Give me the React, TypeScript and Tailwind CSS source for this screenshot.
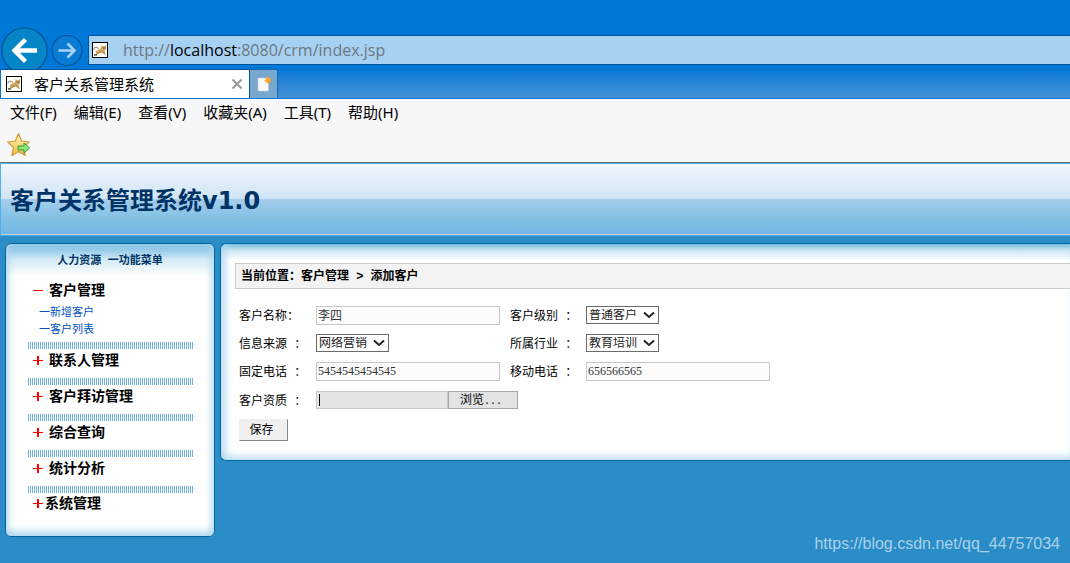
import type { ReactNode } from 'react';

const MENUS = ['文件(F)', '编辑(E)', '查看(V)', '收藏夹(A)', '工具(T)', '帮助(H)'];

const SECTIONS = ['联系人管理', '客户拜访管理', '综合查询', '统计分析'];

function SiteIcon() {
    return (
        <svg width="16" height="16" viewBox="0 0 16 16" className="shrink-0">
            <rect x="0.5" y="0.5" width="15" height="15" fill="#fdfdf6" stroke="#000" />
            <path d="M4 9 8 7l1.500-2L9.500 3l1.500 1.200h1.500L14 3v4l-1.500 2 1.500 4-3-2.500-3 .5-4 1z" fill="#cfa45c" />
            <path d="M2 7.500V6l2-1 3 1.500" fill="none" stroke="#8c8778" />
            <path d="M2 13l3-.5 3-3M10 9.500l3 3" fill="none" stroke="#8a6a38" />
            <path d="M2 13h3M11 6h1M13 5.500v1" stroke="#444" />
        </svg>
    );
}

function StarIcon() {
    return (
        <svg width="25" height="26" viewBox="0 0 25 26">
            <defs>
                <linearGradient id="star" x1="0" y1="0" x2="0" y2="1">
                    <stop offset="0" stopColor="#fff6bd" />
                    <stop offset="1" stopColor="#f6bd3d" />
                </linearGradient>
            </defs>
            <path
                d="M11.500 1.500 14.500 9l7.500 1-5.500 5.400 1.600 8-6.600-4-6.600 4 1.600-8L.8 10l7.500-1z"
                fill="url(#star)"
                stroke="#cf9a35"
                strokeWidth="1.200"
                strokeLinejoin="round"
            />
            <path
                d="M11 14h6v-3l5.500 5-5.500 5v-3h-6z"
                fill="#8fe67c"
                stroke="#2f9a2c"
                strokeLinejoin="round"
            />
        </svg>
    );
}

function ToggleIcon({ open = false }: { open?: boolean }) {
    return (
        <svg width="10" height="10" viewBox="0 0 10 10" shapeRendering="crispEdges" className="shrink-0">
            <rect x="0" y="4" width="10" height="1" fill="#f00" />
            {!open && <rect x="4" y="0" width="2" height="9" fill="#f00" />}
        </svg>
    );
}

function Browser() {
    return (
        <header className="bg-[#0078d7] pt-[27px]">
            {/* Address bar */}
            <div className="flex h-[42px] items-start">
                <button type="button" aria-label="后退" className="ml-px h-[42px] w-[47px] overflow-hidden">
                    <svg width="47" height="47" viewBox="0 0 47 47">
                        <circle cx="23.5" cy="23.5" r="22.7" fill="#0486c6" stroke="#02539b" strokeWidth="1.3" />
                        <path d="M36 23.5H14M24.5 12.5l-11 11 11 11" fill="none" stroke="#fff" strokeWidth="4.4" />
                    </svg>
                </button>
                <button type="button" aria-label="前进" className="ml-[3px] mt-2">
                    <svg width="32" height="32" viewBox="0 0 32 32">
                        <circle cx="16" cy="15.5" r="15" fill="#0a7bd2" stroke="#02539b" strokeWidth="1.2" />
                        <path d="M7.500 15.500H23M16.500 8.500l7 7-7 7" fill="none" stroke="#a9d3f5" strokeWidth="2.6" />
                    </svg>
                </button>
                <div className="ml-[5px] mt-2 flex h-[30px] flex-1 items-center gap-[15px] border border-r-0 border-[#02539b] bg-[#a6d1f3] pl-[3px]">
                    <SiteIcon />
                    <p className="font-['Open_Sans','Noto_Sans',sans-serif] text-base leading-5 text-[#6e7780]">
                        http://<span className="text-black">localhost</span>:8080/crm/index.jsp
                    </p>
                </div>
            </div>

            {/* Tabs */}
            <div className="flex h-[30px] border-b border-[#0078d7] bg-linear-to-b from-[#0078d7] to-[#4292d7]">
                <div className="flex w-[250px] items-center border border-b-0 border-[#02539b] border-l-[#0078d7] bg-white pl-[5px] pr-[6px]">
                    <SiteIcon />
                    <span className="ml-3 flex-1 text-[15px] leading-5">客户关系管理系统</span>
                    <button type="button" aria-label="关闭">
                        <svg width="12" height="12" viewBox="0 0 12 12">
                            <path d="M1.500 1.500l9 9M10.500 1.500l-9 9" stroke="#999" strokeWidth="2" />
                        </svg>
                    </button>
                </div>
                <button
                    type="button"
                    aria-label="新标签页"
                    className="flex w-7 items-center justify-center border border-b-0 border-l-0 border-[#1b66ad] bg-[#78a7cf]"
                >
                    <svg width="16" height="16" viewBox="0 0 16 16">
                        <path d="M2 2h10.500v13H2z" fill="#f9f9f9" stroke="#c3cbd3" strokeWidth="0.600" />
                        <path d="M12 0l.8 2.200 2-.8-.8 2 2 .8-2 .8.8 2-2-.8-.8 2-.8-2-2 .8.800-2-2-.8 2-.8-.8-2 2 .8z" fill="#f6a623" />
                    </svg>
                </button>
            </div>

            {/* Menu bar */}
            <div className="border-b border-[#6f7377] bg-[#f7f7f7]">
                <nav className="flex h-7 items-start gap-[17px] pl-[10px]">
                    {MENUS.map((menu) => (
                        <button type="button" key={menu} className="text-[15px] leading-[26px] whitespace-nowrap">
                            {menu}
                        </button>
                    ))}
                </nav>
                <div className="h-[35px] pl-[7px] pt-[5px]">
                    <button type="button" aria-label="添加到收藏夹">
                        <StarIcon />
                    </button>
                </div>
            </div>
        </header>
    );
}

function Stripes() {
    return <div className="h-[7px] w-[165px] bg-[repeating-linear-gradient(90deg,#6fb4df_0_1px,#fff_1px_2px)]" />;
}

function Sidebar() {
    return (
        <aside className="w-[210px] shrink-0 rounded-md border border-[#00669c] bg-white bg-[linear-gradient(#6fb7e1,#d6ebf6_16px,#fff_32px)] pb-[22px] shadow-[inset_0_-3px_10px_#a8d5ee,inset_0_0_8px_#b8dcf0]">
            <h2 className="pt-[9px] text-center text-[11px] leading-4 font-bold text-[#036]">人力资源 一功能菜单</h2>
            <div className="pl-[22px]">
                <h3 className="mt-3 flex items-center gap-1.5 pl-[5px] text-sm leading-5 font-bold">
                    <ToggleIcon open />
                    客户管理
                </h3>
                <ul className="mt-1 mb-[3px] pl-[11px] text-[11px] leading-[17px] text-[#0055bd]">
                    <li><a href="#add">一新增客户</a></li>
                    <li><a href="#list">一客户列表</a></li>
                </ul>
                {SECTIONS.map((name) => (
                    <div key={name}>
                        <Stripes />
                        <h3 className="mb-[7px] flex items-center gap-1.5 pt-0.5 pl-[5px] text-sm leading-5 font-bold">
                            <ToggleIcon />
                            {name}
                        </h3>
                    </div>
                ))}
                <Stripes />
                <h3 className="flex items-center gap-0.5 pl-[5px] pt-px text-sm leading-5 font-bold">
                    <ToggleIcon />
                    系统管理
                </h3>
            </div>
        </aside>
    );
}

function Label({ id, children }: { id: string; children: ReactNode }) {
    return <label htmlFor={id} className="pt-[3px] whitespace-nowrap">{children}</label>;
}

function TextBox({ id, value }: { id: string; value: string }) {
    return (
        <input
            id={id}
            type="text"
            defaultValue={value}
            className="h-[19px] w-[184px] border border-[#c8c8c8] bg-[#fcfcfc] px-px font-['Liberation_Serif','Noto_Sans_CJK_SC',serif] text-xs text-[#333]"
        />
    );
}

function Dropdown({ id, options }: { id: string; options: string[] }) {
    return (
        <div className="relative w-[73px]">
            <select id={id} className="block h-[18px] w-full appearance-none border border-[#6b6b6b] bg-white pt-0.5 pl-0.5 text-xs leading-[14px] text-[#222]">
                {options.map((option) => (
                    <option key={option}>{option}</option>
                ))}
            </select>
            <svg width="12" height="8" viewBox="0 0 12 8" className="pointer-events-none absolute top-[5px] right-1">
                <path d="M1 1.500l5 4.500 5-4.500" fill="none" stroke="#222" strokeWidth="2" />
            </svg>
        </div>
    );
}

function CustomerForm() {
    return (
        <main className="flex-1 self-start rounded-l-md border border-r-0 border-[#00669c] bg-white bg-[linear-gradient(#6fb7e1,#c9e5f3_6px,#fff_16px)] pt-[19px] pb-[19px] pl-[14px] shadow-[inset_4px_-3px_8px_#b0d9ef]">
            <div className="h-[26px] border border-r-0 border-[#ccc] bg-[#f3f3f3] pt-px pl-[5px] text-xs leading-6 font-bold">
                当前位置：客户管理 &gt; 添加客户
            </div>
            <form className="mt-3 pl-1 text-xs leading-4" onSubmit={(e) => e.preventDefault()}>
                <div className="grid grid-cols-[77px_194px_76px_184px] grid-rows-[28px_28px_28px_30px] items-center">
                    <Label id="name">客户名称：</Label>
                    <TextBox id="name" value="李四" />
                    <Label id="level">客户级别 ：</Label>
                    <Dropdown id="level" options={['普通客户', '重点客户']} />

                    <Label id="source">信息来源 ：</Label>
                    <Dropdown id="source" options={['网络营销', '电话营销']} />
                    <Label id="trade">所属行业 ：</Label>
                    <Dropdown id="trade" options={['教育培训', '电子商务']} />

                    <Label id="phone">固定电话 ：</Label>
                    <TextBox id="phone" value="5454545454545" />
                    <Label id="mobile">移动电话 ：</Label>
                    <TextBox id="mobile" value="656566565" />

                    <Label id="file">客户资质 ：</Label>
                    <div className="relative col-span-3 flex h-[18px]">
                        <input id="file" type="text" readOnly className="w-[132px] border border-[#c8c8c8] bg-[#e5e5e5] px-1" />
                        <span className="absolute top-[3px] left-[3px] h-3 w-px bg-black" />
                        <button type="button" className="w-[70px] border border-[#a8a8a8] bg-[#e3e3e3] pt-0.5 pr-1 text-xs leading-[14px]">
                            浏览<span className="text-[10px]">...</span>
                        </button>
                    </div>
                </div>
                <button
                    type="submit"
                    className="mt-1 h-[22px] w-[49px] border border-t-[#f0f0f0] border-l-[#f0f0f0] border-r-[#888] border-b-[#888] bg-[#f0f0f0] pt-0.5 pr-1 leading-[18px]"
                >
                    保存
                </button>
            </form>
        </main>
    );
}

export default function App() {
    return (
        <div className="relative flex min-h-screen flex-col overflow-hidden bg-[#2a8dc8] font-['Noto_Sans','Noto_Sans_CJK_SC',sans-serif] text-black">
            <Browser />

            <div className="h-[73px] border border-r-0 border-[#4cb0ec] bg-[linear-gradient(#f1f6fd,#cfe4f4_50%,#a6cdeb_50%,#7dbfe3_80%,#74b6e3)]">
                <div className="h-full border-b border-[#c3ccd3] pl-[9px]">
                    <h1 className="font-['DejaVu_Sans','Noto_Sans_CJK_SC',sans-serif] text-2xl leading-[74px] font-bold text-[#036]">
                        客户关系管理系统v1.0
                    </h1>
                </div>
            </div>

            <div className="flex items-start gap-[5px] pt-[7px] pl-[5px] font-['Liberation_Mono','Noto_Sans_CJK_SC',monospace]">
                <Sidebar />
                <CustomerForm />
            </div>

            <p className="absolute right-[10px] bottom-[9px] font-['Liberation_Sans',sans-serif] text-base leading-5 text-white/60">
                https://blog.csdn.net/qq_44757034
            </p>
        </div>
    );
}
